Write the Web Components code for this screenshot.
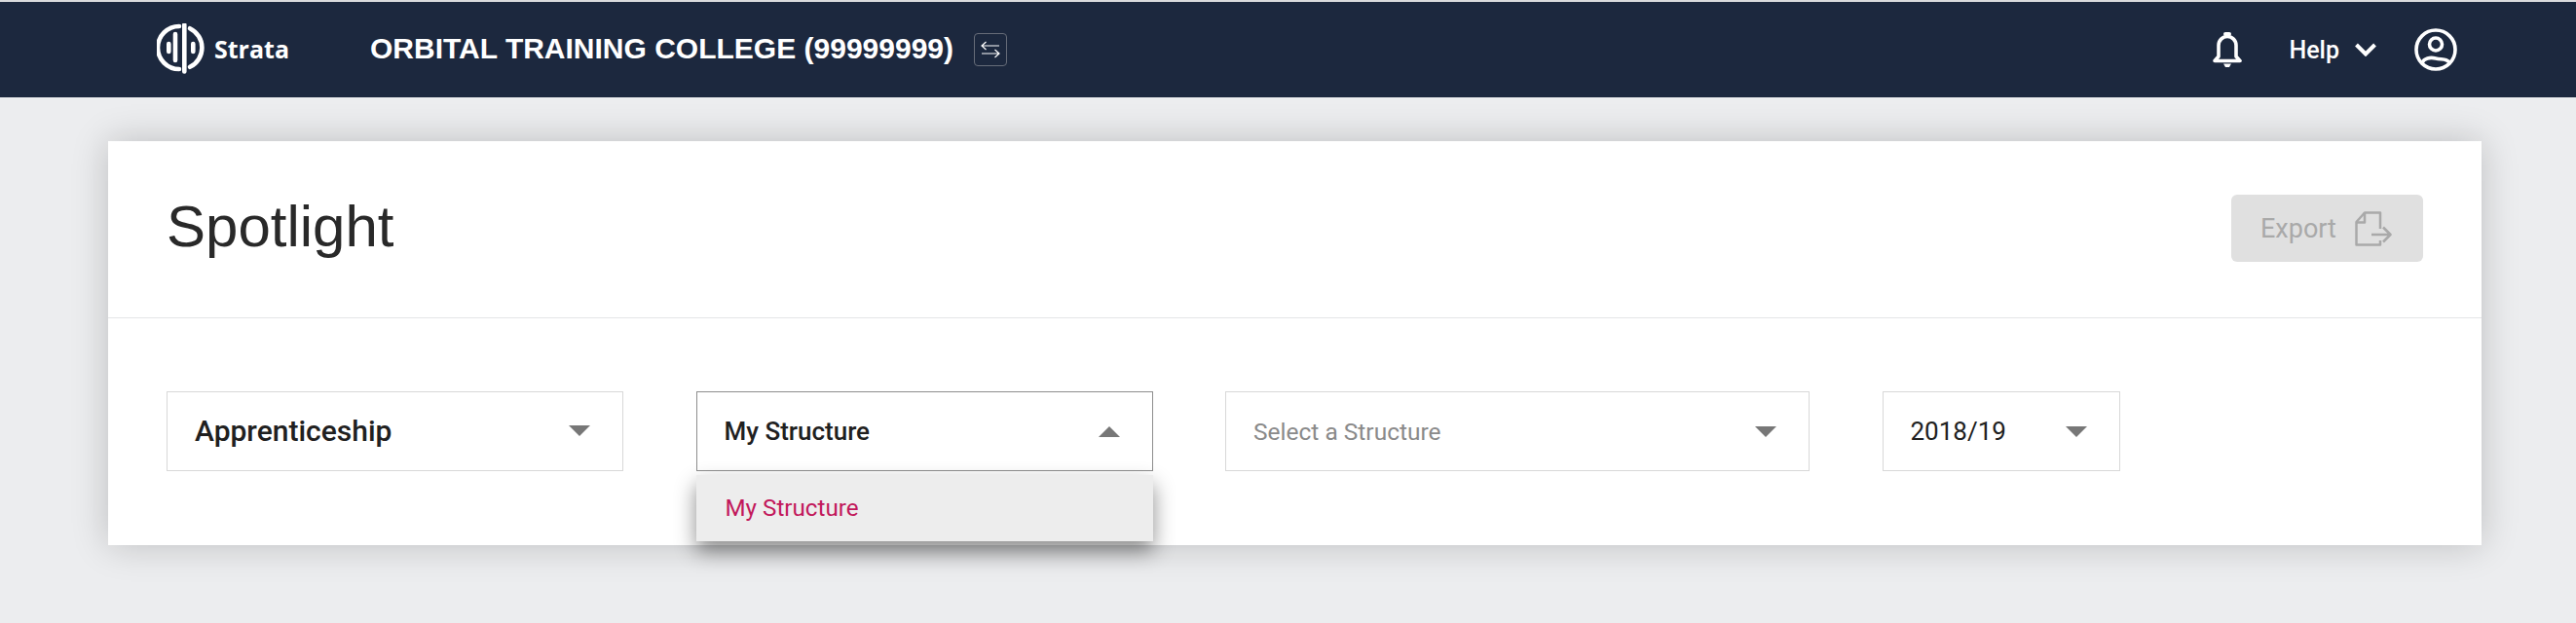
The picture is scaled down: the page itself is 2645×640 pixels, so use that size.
<!DOCTYPE html>
<html>
<head>
<meta charset="utf-8">
<title>Spotlight</title>
<style>
  html, body { margin: 0; height: 100%; }
  body { background: #ecedef; font-family: Roboto, "Liberation Sans", sans-serif; overflow: hidden; }
</style>
</head>
<body>
<app-header>
  <span slot="org">ORBITAL TRAINING COLLEGE (99999999)</span>
</app-header>
<page-card>
  <span slot="title">Spotlight</span>
  <export-button slot="action">Export</export-button>
  <filter-select style="--w:469px;--fs:30px;--fw:500;--pb:2px;">Apprenticeship</filter-select>
  <filter-select style="--w:469px;--fs:26px;--fw:500;" open>My Structure
    <span slot="menu">My Structure</span>
  </filter-select>
  <filter-select style="--w:600px;--fs:24.5px;--fw:400;--fc:#8a8a8a;">Select a Structure</filter-select>
  <filter-select style="--w:244px;--fs:26px;--fw:400;">2018/19</filter-select>
</page-card>

<script>
class AppHeader extends HTMLElement {
  constructor() {
    super();
    this._root = this.attachShadow({mode: 'open'});
  }

  connectedCallback() {
    this._root.innerHTML = `
      <style>
      :host {
        display: flex;
        align-items: center;
        height: 98px;
        border-top: 2px solid #d9dadc;
        background: #1c283e;
        color: #fff;
        padding: 0 122px 0 161px;
      }
      .logo { display: flex; align-items: center; gap: 9px; width: 219px; margin-top: -2px; }
      .logo span { font: 700 25px "Open Sans", sans-serif; }
      .org { font: bold 30px "Liberation Sans", sans-serif; white-space: nowrap; margin-top: -2px; }
      .swap {
        box-sizing: border-box;
        display: flex;
        align-items: center;
        justify-content: center;
        width: 34px;
        height: 34px;
        margin: 0 0 0 21px;
        border: 1px solid #666c78;
        border-radius: 4px;
      }
      .spacer { flex: 1; }
      .help { font: 500 25px Roboto, sans-serif; margin: 0 16px 0 47px; }
      .user { margin-left: 39px; margin-top: -1px; }
      svg { display: block; }
      </style>
      <div class="logo">
        <svg width="50" height="52" viewBox="0 0 50 52" fill="none" stroke="#fff" stroke-width="4.600" stroke-linecap="round">
          <path d="M23 3A22 22 0 0 0 23 47"/>
          <path d="M34 5.200A22 22 0 0 1 34 44.800"/>
          <path d="M12.300 21v8M19 11v27M28.300 1.500v48M37.300 21v8"/>
        </svg>
        <span>Strata</span>
      </div>
      <div class="org"><slot name="org"></slot></div>
      <div class="swap">
        <svg width="22" height="20" viewBox="0 0 22 20" fill="none" stroke="#fff" stroke-width="1.200">
          <path d="M20 6H2M6.500 2L2 6l4.500 4" />
          <path d="M2 14h18M15.500 10l4.500 4-4.500 4" />
        </svg>
      </div>
      <div class="spacer"></div>
      <svg width="32" height="38" viewBox="0 0 32 38" fill="none" stroke="#fff" stroke-width="3.600">
        <path d="M7 26V14.500a9 9 0 0 1 18 0V26l4 4.500H3z" stroke-linejoin="round"/>
        <path d="M14 3h4" stroke-linecap="round" stroke-width="4"/>
        <path d="M12 33.500h8l-2 3.500h-4z" fill="#fff" stroke="none"/>
      </svg>
      <div class="help">Help</div>
      <svg width="22" height="14" viewBox="0 0 22 14" fill="none" stroke="#fff" stroke-width="4">
        <path d="M1.500 2l9.500 9.500L20.500 2"/>
      </svg>
      <svg class="user" width="44" height="44" viewBox="0 0 44 44" fill="none" stroke="#fff" stroke-width="3.600">
        <circle cx="22" cy="22" r="20"/>
        <circle cx="22" cy="16.500" r="6.500"/>
        <path d="M8 35.500C10 31 16 29.500 22 31S34 31 36 35.500"/>
      </svg>
    `;
  }
}

class PageCard extends HTMLElement {
  constructor() {
    super();
    this._root = this.attachShadow({mode: 'open'});
  }

  connectedCallback() {
    this._root.innerHTML = `
      <style>
      :host {
        display: block;
        width: 2437px;
        margin: 45px 0 0 111px;
        background: #fff;
        box-shadow: 0 0 36px rgba(0, 0, 0, .2);
      }
      .head {
        display: flex;
        align-items: center;
        justify-content: space-between;
        height: 181px;
        padding: 0 60px;
        border-bottom: 1px solid #e4e5e7;
      }
      h1 {
        margin: 0 0 6px;
        font: 400 60px "Liberation Sans", sans-serif;
        color: #292929;
      }
      .body {
        display: flex;
        gap: 74.500px;
        padding: 75px 60px 76px;
      }
      </style>
      <div class="head">
        <h1><slot name="title"></slot></h1>
        <slot name="action"></slot>
      </div>
      <div class="body"><slot></slot></div>
    `;
  }
}

class ExportButton extends HTMLElement {
  constructor() {
    super();
    this._root = this.attachShadow({mode: 'open'});
  }

  connectedCallback() {
    this._root.innerHTML = `
      <style>
      :host {
        display: flex;
        align-items: center;
        gap: 19px;
        box-sizing: border-box;
        width: 197px;
        height: 69px;
        margin-bottom: 2px;
        padding-left: 30px;
        border-radius: 6px;
        background: #e0e0e0;
        color: #a9a9a9;
        font: 400 27px Roboto, sans-serif;
      }
      svg { display: block; }
      </style>
      <slot></slot>
      <svg width="38" height="36" viewBox="0 0 38 36" fill="none" stroke="#a9a9a9" stroke-width="2.500" stroke-linejoin="round">
        <path d="M26 18V1.500H10L1.500 11v23.500H26V30"/>
        <path d="M10 1.500V11.500H1.500"/>
        <path d="M17 24H36M29 16.500l7.500 7.500-7.500 7.500"/>
      </svg>
    `;
  }
}

class FilterSelect extends HTMLElement {
  constructor() {
    super();
    this._root = this.attachShadow({mode: 'open'});
  }

  connectedCallback() {
    this._root.innerHTML = `
      <style>
      :host {
        display: block;
        position: relative;
        flex: none;
        box-sizing: border-box;
        width: var(--w);
        height: 82px;
        border: 1px solid #d8d8d8;
      }
      :host([open]) { border-color: #8e8e8e; }
      .value {
        display: flex;
        align-items: center;
        justify-content: space-between;
        box-sizing: border-box;
        height: 100%;
        padding: 0 33px var(--pb, 0) 28px;
        color: var(--fc, #202020);
        font: var(--fw) var(--fs) Roboto, sans-serif;
      }
      .arrow {
        width: 0;
        height: 0;
        border-left: 11px solid transparent;
        border-right: 11px solid transparent;
        border-top: 11px solid #777;
      }
      :host([open]) .arrow { border-top: 0; border-bottom: 11px solid #777; }
      .menu {
        display: none;
        position: absolute;
        top: 85px;
        left: -1px;
        right: -1px;
        height: 68px;
        padding-left: 30px;
        background: #ededed;
        color: #c2185b;
        font: 400 24.200px/68px Roboto, sans-serif;
        box-shadow: 0 10px 20px rgba(0, 0, 0, .45);
      }
      :host([open]) .menu { display: block; }
      </style>
      <div class="value"><span><slot></slot></span><i class="arrow"></i></div>
      <div class="menu"><slot name="menu"></slot></div>
    `;
  }
}

window.customElements.define("app-header", AppHeader);
window.customElements.define("page-card", PageCard);
window.customElements.define("export-button", ExportButton);
window.customElements.define("filter-select", FilterSelect);
</script>
</body>
</html>
